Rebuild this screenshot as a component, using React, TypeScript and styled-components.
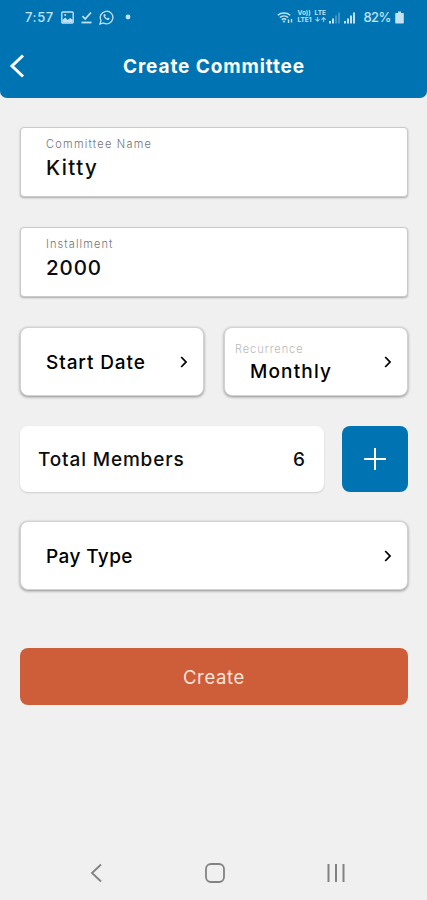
import React from "react";
import styled, { createGlobalStyle } from "styled-components";

const GlobalStyle = createGlobalStyle`
  * { box-sizing: border-box; }
  body { margin: 0; background: #f0f0f0; }
  button { border: 0; padding: 0; margin: 0; font: inherit; text-align: left; cursor: pointer; }
  svg { display: block; flex: none; }
`;

const Screen = styled.div`
  width: 427px;
  height: 900px;
  display: flex;
  flex-direction: column;
  overflow: hidden;
  background: #f0f0f0;
  color: #0c0c0c;
  font-family: Inter, "Open Sans", sans-serif;
`;

const Header = styled.header`
  height: 98px;
  flex: none;
  background: #0074b3;
  border-radius: 0 0 7px 7px;
  color: #fff;
`;

const StatusBar = styled.div`
  height: 34px;
  padding: 0 23px 0 25px;
  display: flex;
  align-items: center;
  justify-content: space-between;
  color: #c2e2f3;
`;

const StatusGroup = styled.div<{ $gap: number }>`
  display: flex;
  align-items: center;
  gap: ${(p) => p.$gap}px;
`;

const BatteryGroup = styled(StatusGroup)`
  padding-left: 4px;
`;

const StatusText = styled.span<{ $spacing: number }>`
  font-size: 13px;
  line-height: 16px;
  font-weight: 500;
  letter-spacing: ${(p) => p.$spacing}px;
`;

const Network = styled.span`
  display: flex;
  flex-direction: column;
  font-size: 6.5px;
  line-height: 7px;
  font-weight: 700;
`;

const TitleBar = styled.div`
  height: 64px;
  display: grid;
  grid-template-columns: 60px 1fr 60px;
  align-items: center;
`;

const BackButton = styled.button`
  background: none;
  color: #fff;
  padding-left: 9px;
`;

const Title = styled.h1`
  margin: 0;
  padding: 1px 0 0 1px;
  text-align: center;
  font-size: 19px;
  line-height: 24px;
  font-weight: 700;
  letter-spacing: 0.9px;
  white-space: nowrap;
`;

const Form = styled.main`
  flex: 1;
  padding: 29px 19px 0 20px;
  display: flex;
  flex-direction: column;
`;

const Field = styled.label`
  height: 70px;
  margin-bottom: 30px;
  padding: 9px 25px 0;
  display: flex;
  flex-direction: column;
  background: #fff;
  border: 1px solid #cacaca;
  border-radius: 4px;
  box-shadow: 0 1px 2px rgba(0, 0, 0, 0.3);
`;

const Caption = styled.span<{ $spacing: number; $faint?: boolean }>`
  font-size: 11px;
  line-height: 14px;
  font-weight: 300;
  letter-spacing: ${(p) => p.$spacing}px;
  color: ${(p) => (p.$faint ? "#b8b8b8" : "#747474")};
`;

const Value = styled.span<{ $spacing: number; $size?: number }>`
  font-size: ${(p) => p.$size ?? 19}px;
  line-height: 26px;
  font-weight: 500;
  letter-spacing: ${(p) => p.$spacing}px;
  white-space: nowrap;
`;

const FieldValue = styled(Value)`
  margin-top: 4px;
`;

const CenteredValue = styled(Value)`
  padding-top: 2px;
`;

const Row = styled.div<{ $columns: string; $gap: number }>`
  display: grid;
  grid-template-columns: ${(p) => p.$columns};
  column-gap: ${(p) => p.$gap}px;
`;

const Select = styled.button<{ $inset: number }>`
  height: 69px;
  padding: 0 15px 0 ${(p) => p.$inset}px;
  display: flex;
  align-items: center;
  justify-content: space-between;
  background: #fff;
  border: 1px solid #d2d2d2;
  border-radius: 8px;
  box-shadow: 0 1px 3px rgba(0, 0, 0, 0.42);
`;

const Stacked = styled.span`
  display: flex;
  flex-direction: column;
  padding-top: 4px;
`;

const StackedValue = styled(Value)`
  padding-left: 15px;
  margin-top: 3px;
`;

const MembersRow = styled(Row)`
  margin: 30px 0 29px;
`;

const Members = styled.div`
  height: 66px;
  padding: 0 19px 0 18px;
  display: flex;
  align-items: center;
  justify-content: space-between;
  background: #fff;
  border-radius: 8px;
  box-shadow: 0 1px 2px rgba(0, 0, 0, 0.15);
`;

const AddButton = styled.button`
  height: 66px;
  display: flex;
  align-items: center;
  justify-content: center;
  background: #0074b3;
  color: #fff;
  border-radius: 8px;
`;

const CreateButton = styled.button`
  height: 57px;
  margin: 58px 0 0;
  display: flex;
  align-items: center;
  justify-content: center;
  background: #ce5e39;
  color: #fbe6dc;
  border-radius: 8px;
  font-size: 18.5px;
  letter-spacing: 0.65px;
`;

const NavBar = styled.nav`
  height: 54px;
  flex: none;
  padding: 0 82px 0 90px;
  display: flex;
  align-items: center;
  justify-content: space-between;
  color: #828282;
`;

const Chevron = () => (
  <svg width="8" height="12" viewBox="0 0 8 12" fill="none" stroke="currentColor" strokeWidth="1.8">
    <path d="M1.2 1 6 6 1.2 11" />
  </svg>
);

const PhotoIcon = () => (
  <svg width="13" height="13" viewBox="0 0 13 13" fill="none" stroke="currentColor">
    <rect x=".8" y="1" width="11.4" height="11" rx="1" strokeWidth="1.4" />
    <path d="M1.5 11.5V9l2.8-2.5L6.5 9l2.7-2 2.5 1.8v2.7z" fill="currentColor" stroke="none" />
    <circle cx="4.2" cy="4" r="1" fill="currentColor" stroke="none" />
  </svg>
);

const DoneIcon = () => (
  <svg width="11" height="13" viewBox="0 0 11 13" fill="none" stroke="currentColor">
    <path d="M1.5 5.2 4.2 8 10 1.5" strokeWidth="1.8" />
    <path d="M.5 11.5h10" strokeWidth="1.8" />
  </svg>
);

const ChatIcon = () => (
  <svg width="15" height="15" viewBox="0 0 15 15" fill="none" stroke="currentColor">
    <path d="M1 14l1-3.6A6.3 6.3 0 1 1 4.5 13z" strokeWidth="1.3" />
    <path
      d="M5 4.2c-.9.8-.7 2.4.8 4 1.6 1.6 3.4 2.2 4.4 1.4l.5-1-1.7-1-.8.8c-1-.3-1.9-1.2-2.2-2.1l.8-.8-.7-1.6z"
      fill="currentColor"
      stroke="none"
    />
  </svg>
);

const DotIcon = () => (
  <svg width="12" height="6" viewBox="0 0 12 6" fill="currentColor">
    <circle cx="7" cy="3" r="2.4" />
  </svg>
);

const WifiIcon = () => (
  <svg width="17" height="13" viewBox="0 0 17 13" fill="none" stroke="currentColor">
    <path d="M.8 4.2a9.5 9.5 0 0 1 12.4 0M2.8 6.5a6.3 6.3 0 0 1 8.4 0M4.8 8.7a3.3 3.3 0 0 1 4.4 0" strokeWidth="1.5" />
    <path d="M5.5 9.8h3L7 12z" fill="currentColor" stroke="none" />
    <path d="M11.5 8.5V12M14.5 8v3.5" strokeWidth="1.4" />
  </svg>
);

const SignalIcon = ({ level }: { level: number }) => (
  <svg width="12" height="13" viewBox="0 0 12 13" fill="currentColor">
    {[2.5, 5, 8, 11].map((h, i) => (
      <rect key={h} x={i * 3} y={12.5 - h} width="2" height={h} opacity={i < level ? 1 : 0.3} />
    ))}
  </svg>
);

const BatteryIcon = () => (
  <svg width="9" height="13" viewBox="0 0 9 13" fill="currentColor">
    <path d="M3 .5h3V2h2a.8.8 0 0 1 .8.8v9a.8.8 0 0 1-.8.8H1a.8.8 0 0 1-.8-.8v-9A.8.8 0 0 1 1 2h2z" />
  </svg>
);

export default function App() {
  return (
    <>
      <GlobalStyle />
      <Screen>
        <Header>
          <StatusBar>
            <StatusGroup $gap={7}>
              <StatusText $spacing={0.6}>7:57</StatusText>
              <PhotoIcon />
              <DoneIcon />
              <ChatIcon />
              <DotIcon />
            </StatusGroup>
            <StatusGroup $gap={3}>
              <WifiIcon />
              <Network>
                <span>Vo))</span>
                <span>LTE1</span>
              </Network>
              <Network>
                <span>LTE</span>
                <span>↓↑</span>
              </Network>
              <SignalIcon level={2} />
              <SignalIcon level={4} />
              <BatteryGroup $gap={4}>
                <StatusText $spacing={-0.5}>82%</StatusText>
                <BatteryIcon />
              </BatteryGroup>
            </StatusGroup>
          </StatusBar>
          <TitleBar>
            <BackButton aria-label="Back">
              <svg width="16" height="24" viewBox="0 0 16 24" fill="none" stroke="currentColor" strokeWidth="3">
                <path d="M14 1.5 3 12 14 22.5" />
              </svg>
            </BackButton>
            <Title>Create Committee</Title>
          </TitleBar>
        </Header>

        <Form>
          <Field>
            <Caption $spacing={1.25}>Committee Name</Caption>
            <FieldValue $size={20.5} $spacing={1.4}>Kitty</FieldValue>
          </Field>
          <Field>
            <Caption $spacing={1.1}>Installment</Caption>
            <FieldValue $size={20.5} $spacing={0.9}>2000</FieldValue>
          </Field>

          <Row $columns="184px 184px" $gap={20}>
            <Select $inset={25}>
              <CenteredValue $spacing={0.9}>Start Date</CenteredValue>
              <Chevron />
            </Select>
            <Select $inset={10}>
              <Stacked>
                <Caption $faint $spacing={0.95}>Recurrence</Caption>
                <StackedValue $spacing={1.15}>Monthly</StackedValue>
              </Stacked>
              <Chevron />
            </Select>
          </Row>

          <MembersRow $columns="304px 66px" $gap={18}>
            <Members>
              <CenteredValue $spacing={0.85}>Total Members</CenteredValue>
              <CenteredValue $spacing={0}>6</CenteredValue>
            </Members>
            <AddButton aria-label="Add member">
              <svg width="22" height="22" viewBox="0 0 22 22" stroke="currentColor" strokeWidth="2">
                <path d="M11 0v22M0 11h22" />
              </svg>
            </AddButton>
          </MembersRow>

          <Select $inset={25}>
            <CenteredValue $spacing={0.4}>Pay Type</CenteredValue>
            <Chevron />
          </Select>

          <CreateButton>Create</CreateButton>
        </Form>

        <NavBar>
          <svg width="12" height="20" viewBox="0 0 12 20" fill="none" stroke="currentColor" strokeWidth="1.8">
            <path d="M11 1.5 2 10l9 8.5" />
          </svg>
          <svg width="20" height="20" viewBox="0 0 20 20" fill="none" stroke="currentColor" strokeWidth="1.8">
            <rect x="1" y="1" width="18" height="18" rx="5" />
          </svg>
          <svg width="18" height="20" viewBox="0 0 18 20" stroke="currentColor" strokeWidth="2">
            <path d="M1.5 1v18M9 1v18M16.5 1v18" />
          </svg>
        </NavBar>
      </Screen>
    </>
  );
}
